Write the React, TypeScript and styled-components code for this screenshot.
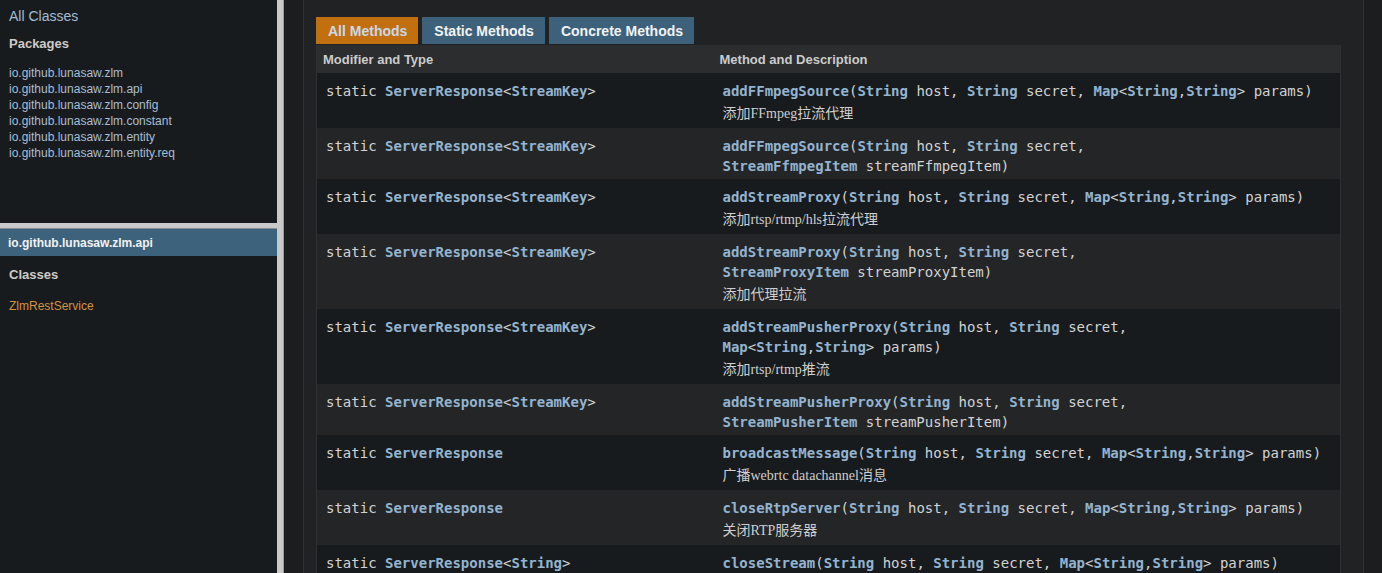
import React from "react";
import styled, { createGlobalStyle } from "styled-components";

const Global = createGlobalStyle`
  html, body { margin: 0; padding: 0; background: #181b1e; overflow: hidden; }
  * { box-sizing: border-box; }
`;

const Page = styled.div`
  display: flex;
  width: 1382px;
  height: 573px;
  overflow: hidden;
  font-family: "Liberation Sans", Arial, sans-serif;
`;

const LeftFrame = styled.div`
  width: 277px;
  flex: none;
  display: flex;
  flex-direction: column;
  background: #181b1e;
`;

const TopFrame = styled.div`
  height: 223px;
  padding: 8px 0 0 9px;
`;

const AllClasses = styled.div`
  font-size: 14px;
  line-height: 16px;
  color: #a3bcd4;
`;

const SideHeading = styled.div<{ $mt: number }>`
  margin-top: ${(p) => p.$mt}px;
  font-size: 13px;
  font-weight: bold;
  line-height: 16px;
  color: #cfcbc6;
`;

const PackageList = styled.ul`
  list-style: none;
  margin: 13px 0 0 0;
  padding: 0;
`;

const PackageItem = styled.li`
  font-size: 12px;
  line-height: 16px;
  color: #a8bfd4;
`;

const HDivider = styled.div`
  flex: none;
  height: 6px;
  background: #c9c9c9;
  border-bottom: 1px solid #8c8c8c;
`;

const BottomFrame = styled.div`
  flex: 1;
  display: flex;
  flex-direction: column;
`;

const PackageBar = styled.div`
  height: 27px;
  background: #3d627b;
  color: #f2f2f2;
  font-size: 12px;
  font-weight: bold;
  line-height: 28px;
  padding-left: 8px;
`;

const ClassBlock = styled.div`
  padding: 11px 0 0 9px;
`;

const ClassLink = styled.div`
  margin-top: 15px;
  font-size: 12px;
  line-height: 16px;
  color: #d4933e;
`;

const VDivider = styled.div`
  width: 7px;
  flex: none;
  background: #c9c9c9;
  border-right: 1px solid #9a9a9a;
`;

const RightFrame = styled.div`
  flex: 1;
  background: #1b1d1f;
  padding: 0 18px 0 19px;
  display: flex;
`;

const Content = styled.div`
  flex: 1;
  background: #202224;
  border-left: 1px solid #303234;
  border-right: 1px solid #303234;
  padding: 17px 21px 0 12px;
`;

const Tabs = styled.div`
  display: flex;
  gap: 4px;
  height: 27px;
  margin-bottom: 1px;
`;

const Tab = styled.div<{ $active?: boolean }>`
  height: 27px;
  padding: 0 11px 0 12px;
  font-size: 14px;
  font-weight: bold;
  line-height: 28px;
  background: ${(p) => (p.$active ? "#c26f0f" : "#3d617a")};
  color: ${(p) => (p.$active ? "#c6d9ec" : "#f3f3f3")};
  white-space: nowrap;
`;

const Table = styled.table`
  width: 1025px;
  border-collapse: collapse;
  border-left: 1px solid #2e3032;
  border-right: 1px solid #2e3032;
`;

const Th = styled.th<{ $w?: number }>`
  text-align: left;
  height: 28px;
  padding: 0 3px 0 6px;
  background: #2b2d2f;
  color: #cccccc;
  font-size: 13px;
  font-weight: bold;
  ${(p) => (p.$w ? `width: ${p.$w}px;` : "")}
`;

const Tr = styled.tr<{ $alt: boolean }>`
  background: ${(p) => (p.$alt ? "#232527" : "#181b1d")};
`;

const Td = styled.td`
  vertical-align: top;
  padding: 8px 3px 3px 9px;
`;

const Code = styled.div`
  font-family: "DejaVu Sans Mono", "Liberation Mono", monospace;
  font-size: 14px;
  line-height: 20px;
  color: #d3d3d3;
`;

const Link = styled.span`
  color: #93b4d0;
  font-weight: bold;
`;

const NoBreak = styled.span`
  white-space: nowrap;
`;

const Desc = styled.div`
  margin: 3px 10px 2px 0;
  font-family: "Liberation Serif", "Noto Sans CJK SC", serif;
  font-size: 14px;
  line-height: 19px;
  color: #cfcfcf;
`;

type Tok = { t: string; link?: boolean };
const L = (t: string): Tok => ({ t, link: true });
const P = (t: string): Tok => ({ t });

const srKey: Tok[] = [L("ServerResponse"), P("<"), L("StreamKey"), P(">")];
const sr: Tok[] = [L("ServerResponse")];
const srStr: Tok[] = [L("ServerResponse"), P("<"), L("String"), P(">")];
const mapT: Tok[] = [L("Map"), P("<"), L("String"), P(","), L("String"), P(">")];

type Param = { type: Tok[]; name: string };
const std = (last: Param): Param[] => [
  { type: [L("String")], name: "host" },
  { type: [L("String")], name: "secret" },
  last,
];
const mapP: Param = { type: mapT, name: "params" };

type Row = { ret: Tok[]; name: string; params: Param[]; desc?: string };

const rows: Row[] = [
  { ret: srKey, name: "addFFmpegSource", params: std(mapP), desc: "添加FFmpeg拉流代理" },
  { ret: srKey, name: "addFFmpegSource", params: std({ type: [L("StreamFfmpegItem")], name: "streamFfmpegItem" }) },
  { ret: srKey, name: "addStreamProxy", params: std(mapP), desc: "添加rtsp/rtmp/hls拉流代理" },
  { ret: srKey, name: "addStreamProxy", params: std({ type: [L("StreamProxyItem")], name: "streamProxyItem" }), desc: "添加代理拉流" },
  { ret: srKey, name: "addStreamPusherProxy", params: std(mapP), desc: "添加rtsp/rtmp推流" },
  { ret: srKey, name: "addStreamPusherProxy", params: std({ type: [L("StreamPusherItem")], name: "streamPusherItem" }) },
  { ret: sr, name: "broadcastMessage", params: std(mapP), desc: "广播webrtc datachannel消息" },
  { ret: sr, name: "closeRtpServer", params: std(mapP), desc: "关闭RTP服务器" },
  { ret: srStr, name: "closeStream", params: std(mapP), desc: "关闭流" },
];

const Toks = ({ toks }: { toks: Tok[] }) => (
  <>
    {toks.map((k, i) => (k.link ? <Link key={i}>{k.t}</Link> : <React.Fragment key={i}>{k.t}</React.Fragment>))}
  </>
);

const packages = [
  "io.github.lunasaw.zlm",
  "io.github.lunasaw.zlm.api",
  "io.github.lunasaw.zlm.config",
  "io.github.lunasaw.zlm.constant",
  "io.github.lunasaw.zlm.entity",
  "io.github.lunasaw.zlm.entity.req",
];

export default function App() {
  return (
    <>
      <Global />
      <Page>
        <LeftFrame>
          <TopFrame>
            <AllClasses>All Classes</AllClasses>
            <SideHeading $mt={12}>Packages</SideHeading>
            <PackageList>
              {packages.map((p) => (
                <PackageItem key={p}>{p}</PackageItem>
              ))}
            </PackageList>
          </TopFrame>
          <HDivider />
          <BottomFrame>
            <PackageBar>io.github.lunasaw.zlm.api</PackageBar>
            <ClassBlock>
              <SideHeading $mt={0}>Classes</SideHeading>
              <ClassLink>ZlmRestService</ClassLink>
            </ClassBlock>
          </BottomFrame>
        </LeftFrame>
        <VDivider />
        <RightFrame>
          <Content>
            <Tabs>
              <Tab $active>All Methods</Tab>
              <Tab>Static Methods</Tab>
              <Tab>Concrete Methods</Tab>
            </Tabs>
            <Table>
              <thead>
                <tr>
                  <Th $w={397}>Modifier and Type</Th>
                  <Th>Method and Description</Th>
                </tr>
              </thead>
              <tbody>
                {rows.map((r, i) => (
                  <Tr key={i} $alt={i % 2 === 1}>
                    <Td>
                      <Code>
                        static <Toks toks={r.ret} />
                      </Code>
                    </Td>
                    <Td>
                      <Code>
                        <Link>{r.name}</Link>(
                        {r.params.map((p, j) => (
                          <React.Fragment key={j}>
                            <NoBreak>
                              <Toks toks={p.type} />
                              {"\u00a0" + p.name}
                              {j < r.params.length - 1 ? "," : ")"}
                            </NoBreak>
                            {j < r.params.length - 1 ? " " : ""}
                          </React.Fragment>
                        ))}
                      </Code>
                      {r.desc && <Desc>{r.desc}</Desc>}
                    </Td>
                  </Tr>
                ))}
              </tbody>
            </Table>
          </Content>
        </RightFrame>
      </Page>
    </>
  );
}
